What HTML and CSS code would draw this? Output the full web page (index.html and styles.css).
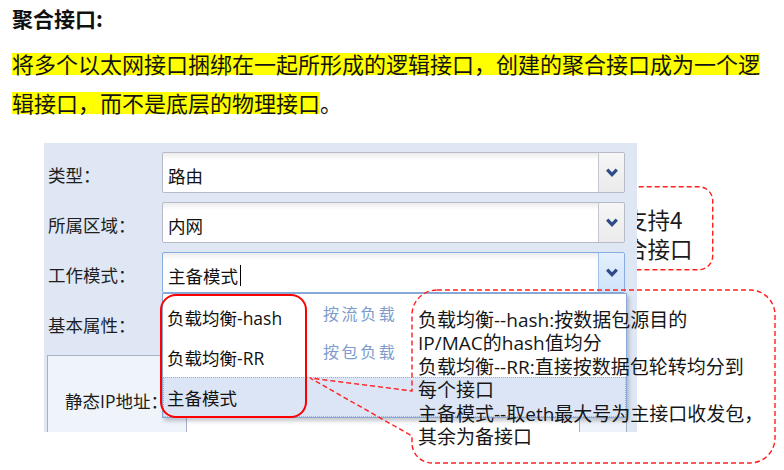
FILE: index.html
```html
<!DOCTYPE html>
<html lang="zh-CN">
<head>
<meta charset="utf-8">
<title>聚合接口</title>
<link rel="stylesheet" href="styles.css">
</head>
<body>
<div class="page">
  <h1 class="title">聚合接口:</h1>
  <p class="para"><span class="hl">将多个以太网接口捆绑在一起所形成的逻辑接口，创建的聚合接口成为一个逻</span><br><span class="hl">辑接口，而不是底层的物理接口</span>。</p>

  <div class="note note-max">
    <svg class="note-frame" width="154" height="85" viewBox="0 0 154 85"><rect x="0.7" y="0.7" width="152" height="83" rx="14" ry="14"/></svg>
    <div class="note-max-text">最多支持4<br>个聚合接口</div>
  </div>

  <div class="panel">
    <div class="form">
      <div class="form-row">
        <span class="label">类型：</span>
        <div class="combo"><span class="combo-text">路由</span><span class="combo-btn"><svg width="12" height="9" viewBox="0 0 12 9"><path d="M1.2 1.6 L6 6.6 L10.8 1.6"/></svg></span></div>
      </div>
      <div class="form-row">
        <span class="label">所属区域：</span>
        <div class="combo"><span class="combo-text">内网</span><span class="combo-btn"><svg width="12" height="9" viewBox="0 0 12 9"><path d="M1.2 1.6 L6 6.6 L10.8 1.6"/></svg></span></div>
      </div>
      <div class="form-row">
        <span class="label">工作模式：</span>
        <div class="combo combo-focus"><span class="combo-text">主备模式<span class="caret"></span></span><span class="combo-btn"><svg width="12" height="9" viewBox="0 0 12 9"><path d="M1.2 1.6 L6 6.6 L10.8 1.6"/></svg></span></div>
      </div>
      <div class="form-row">
        <span class="label">基本属性：</span>
      </div>
    </div>
    <div class="tabs">
      <div class="tab">静态IP地址：</div>
      <div class="tab-body"><div class="tab-side"></div></div>
    </div>

    <div class="dropdown">
      <div class="opt"><span class="opt-name">负载均衡-hash</span><span class="opt-hint">按流负载</span></div>
      <div class="opt"><span class="opt-name">负载均衡-RR</span><span class="opt-hint hint-low">按包负载</span></div>
      <div class="opt opt-selected"><span class="opt-name">主备模式</span></div>
    </div>
    <div class="ring"></div>
  </div>

  <div class="note note-modes">
    <svg class="note-frame" width="480" height="185" viewBox="0 0 480 185"><path d="M137 7 H450 A25 25 0 0 1 475 32 V155 A25 25 0 0 1 450 180 H132 A20 20 0 0 1 112 160 V153 L10 95 L112 108 V32 A25 25 0 0 1 137 7 Z"/></svg>
    <div class="note-modes-text">负载均衡--hash:按数据包源目的<br>IP/MAC的hash值均分<br>负载均衡--RR:直接按数据包轮转均分到<br>每个接口<br>主备模式--取eth最大号为主接口收发包，<br>其余为备接口</div>
  </div>
</div>
</body>
</html>
```

FILE: styles.css
```css
html, body {
  margin: 0;
  padding: 0;
}
body {
  width: 784px;
  height: 470px;
  overflow: hidden;
  background: #ffffff;
  color: #1b1b1b;
  font-family: "Noto Sans CJK SC", sans-serif;
}
.page {
  position: relative;
  width: 784px;
  height: 470px;
}
.title {
  margin: 3px 0 0 12px;
  font-size: 21px;
  line-height: 30px;
  font-weight: 700;
  color: #111;
}
.para {
  margin: 11px 0 0 12px;
  font-size: 22px;
  line-height: 39px;
  color: #141414;
}
.hl {
  background: linear-gradient(to bottom, transparent 6px, #ffff00 6px, #ffff00 28px, transparent 28px);
}

/* screenshot panel */
.panel {
  position: relative;
  z-index: 1;
  margin: 21px 0 0 44px;
  width: 593px;
  height: 289px;
  box-sizing: border-box;
  padding: 9px 0 0 4px;
  background: #dfe7f5;
  overflow: hidden;
  font-family: "Open Sans", "Noto Sans CJK SC", sans-serif;
}
.form {
  display: flex;
  flex-direction: column;
  gap: 9px;
}
.form-row {
  display: flex;
  align-items: center;
  height: 41px;
}
.label {
  width: 114px;
  padding-top: 4px;
  font-size: 17.5px;
  color: #1e1e1e;
}
.combo {
  display: flex;
  width: 463px;
  height: 41px;
  box-sizing: border-box;
  border: 1px solid #b7bbc9;
  border-radius: 2px;
  background: linear-gradient(to bottom, #ececee, #ffffff 7px);
}
.combo-text {
  flex: 1;
  display: flex;
  align-items: center;
  padding: 6px 0 0 5px;
  font-size: 17.5px;
  color: #111;
}
.caret {
  display: inline-block;
  width: 0;
  height: 21px;
  margin-left: 2px;
  border-left: 1.5px solid #000;
}
.combo-btn {
  width: 25px;
  display: flex;
  align-items: center;
  justify-content: center;
  border-left: 1px solid #c3c5cf;
  border-radius: 0 2px 2px 0;
  background: linear-gradient(to bottom, #f6f6f6, #ebebeb);
}
.combo-btn svg path {
  fill: none;
  stroke: #2f4c88;
  stroke-width: 3.2;
  stroke-linecap: butt;
  stroke-linejoin: miter;
}
.combo-focus {
  border-color: #86addd;
}
.combo-focus .combo-btn {
  border-left-color: #9fc2ea;
  background: linear-gradient(to bottom, #e3effc, #d0e4fa);
}

.tabs {
  display: flex;
  margin: 12px 0 0 -1px;
  height: 100px;
}
.tab {
  width: 140px;
  box-sizing: border-box;
  border: 1px solid #a6b1c6;
  border-bottom: none;
  background: #eff3fa;
  padding: 32px 0 0 17px;
  font-size: 17.5px;
  color: #1b1b1b;
  white-space: nowrap;
}
.tab-body {
  display: flex;
  justify-content: flex-end;
  width: 440px;
  box-sizing: border-box;
  border-top: 1px solid #a6b1c6;
  border-right: 1px solid #a6b1c6;
  background: #ffffff;
}
.tab-side {
  width: 46px;
  border-left: 1px solid #a6b1c6;
  background: #eef2f9;
}

/* open dropdown list */
.dropdown {
  position: absolute;
  left: 118px;
  top: 150px;
  width: 465px;
  box-sizing: border-box;
  padding-top: 3px;
  border: 1px solid #8aa8d4;
  background: #ffffff;
  box-shadow: 2px 3px 4px rgba(60, 70, 90, 0.3);
}
.opt {
  display: flex;
  align-items: center;
  height: 40px;
  box-sizing: border-box;
  padding-left: 4px;
  font-size: 17.5px;
  color: #111;
}
.opt-name {
  width: 156px;
  white-space: nowrap;
}
.opt-hint {
  margin-bottom: 8px;
  font-size: 16px;
  letter-spacing: 2.6px;
  color: #7d9ccb;
}
.hint-low {
  margin-bottom: 12px;
}
.opt-selected {
  background: #dbe5f5;
  border: 1px dotted #9ab3dc;
  padding-left: 3px;
}
.ring {
  position: absolute;
  left: 116px;
  top: 151px;
  width: 147px;
  height: 124px;
  box-sizing: border-box;
  border: 2.5px solid #ff0000;
  border-radius: 16px;
}

/* annotations */
.note {
  position: absolute;
}
.note-frame {
  position: absolute;
  left: 0;
  top: 0;
}
.note-frame rect,
.note-frame path {
  fill: none;
  stroke: #ff1f1f;
  stroke-width: 1.4;
  stroke-dasharray: 5 3;
}
.note-max {
  left: 560px;
  top: 183px;
  width: 154px;
  height: 85px;
  z-index: 0;
}
.note-max-text {
  position: relative;
  padding: 19px 0 0 20px;
  font-size: 22.5px;
  line-height: 29px;
  color: #1b1b1b;
  white-space: nowrap;
}
.note-modes {
  left: 300px;
  top: 280px;
  width: 480px;
  height: 185px;
  z-index: 2;
}
.note-modes-text {
  position: relative;
  padding: 26px 0 0 118px;
  font-family: "Open Sans", "Noto Sans CJK SC", sans-serif;
  font-size: 19px;
  line-height: 23.4px;
  color: #161616;
  white-space: nowrap;
}
```
